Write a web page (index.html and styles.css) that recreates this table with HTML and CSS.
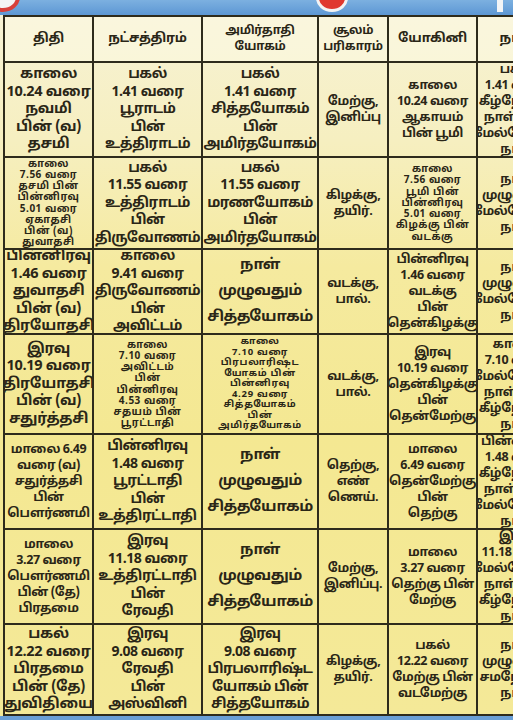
FILE: index.html
```html
<!DOCTYPE html>
<html lang="ta">
<head>
<meta charset="utf-8">
<link rel="stylesheet" href="styles.css">
</head>
<body>
<div class="page">
  <div class="band">
    <span class="logo-left"></span>
    <span class="logo-mid"></span>
    <span class="logo-right"></span>
  </div>
  <div class="sheet">
    <div class="grid">
      <div class="c h">திதி</div>
      <div class="c h">நட்சத்திரம்</div>
      <div class="c h t">அமிர்தாதி<br>யோகம்</div>
      <div class="c h t">சூலம்<br>பரிகாரம்</div>
      <div class="c h">யோகினி</div>
      <div class="c h">நாள்</div>

      <div class="c c1">காலை<br>10.24 வரை<br>நவமி<br>பின் (வ)<br>தசமி</div>
      <div class="c">பகல்<br>1.41 வரை<br>பூராடம்<br>பின்<br>உத்திராடம்</div>
      <div class="c">பகல்<br>1.41 வரை<br>சித்தயோகம்<br>பின்<br>அமிர்தயோகம்</div>
      <div class="c sm">மேற்கு,<br>இனிப்பு</div>
      <div class="c sm">காலை<br>10.24 வரை<br>ஆகாயம்<br>பின் பூமி</div>
      <div class="c sm">பகல்<br>1.41 வரை<br>கீழ்நோக்கு<br>நாள் பின்<br>மேல்நோக்கு<br>நாள்</div>

      <div class="c xs">காலை<br>7.56 வரை<br>தசமி பின்<br>பின்னிரவு<br>5.01 வரை<br>ஏகாதசி<br>பின் (வ)<br>துவாதசி</div>
      <div class="c">பகல்<br>11.55 வரை<br>உத்திராடம்<br>பின்<br>திருவோணம்</div>
      <div class="c">பகல்<br>11.55 வரை<br>மரணயோகம்<br>பின்<br>அமிர்தயோகம்</div>
      <div class="c sm">கிழக்கு,<br>தயிர்.</div>
      <div class="c xs">காலை<br>7.56 வரை<br>பூமி பின்<br>பின்னிரவு<br>5.01 வரை<br>கிழக்கு பின்<br>வடக்கு</div>
      <div class="c sm">நாள்<br>முழுவதும்<br>மேல்நோக்கு<br>நாள்</div>

      <div class="c c1">பின்னிரவு<br>1.46 வரை<br>துவாதசி<br>பின் (வ)<br>திரயோதசி</div>
      <div class="c">காலை<br>9.41 வரை<br>திருவோணம்<br>பின்<br>அவிட்டம்</div>
      <div class="c wide">நாள்<br>முழுவதும்<br>சித்தயோகம்</div>
      <div class="c sm">வடக்கு,<br>பால்.</div>
      <div class="c sm">பின்னிரவு<br>1.46 வரை<br>வடக்கு<br>பின்<br>தென்கிழக்கு</div>
      <div class="c sm">நாள்<br>முழுவதும்<br>மேல்நோக்கு<br>நாள்</div>

      <div class="c c1">இரவு<br>10.19 வரை<br>திரயோதசி<br>பின் (வ)<br>சதுர்த்தசி</div>
      <div class="c xs">காலை<br>7.10 வரை<br>அவிட்டம்<br>பின்<br>பின்னிரவு<br>4.53 வரை<br>சதயம் பின்<br>பூரட்டாதி</div>
      <div class="c xxs">காலை<br>7.10 வரை<br>பிரபலாரிஷ்ட<br>யோகம் பின்<br>பின்னிரவு<br>4.29 வரை<br>சித்தயோகம்<br>பின்<br>அமிர்தயோகம்</div>
      <div class="c sm">வடக்கு,<br>பால்.</div>
      <div class="c sm">இரவு<br>10.19 வரை<br>தென்கிழக்கு<br>பின்<br>தென்மேற்கு</div>
      <div class="c sm">காலை<br>7.10 வரை<br>மேல்நோக்கு<br>நாள் பின்<br>கீழ்நோக்கு<br>நாள்</div>

      <div class="c sm">மாலை 6.49<br>வரை (வ)<br>சதுர்த்தசி<br>பின்<br>பௌர்ணமி</div>
      <div class="c">பின்னிரவு<br>1.48 வரை<br>பூரட்டாதி<br>பின்<br>உத்திரட்டாதி</div>
      <div class="c wide">நாள்<br>முழுவதும்<br>சித்தயோகம்</div>
      <div class="c sm">தெற்கு,<br>எண்<br>ணெய்.</div>
      <div class="c sm">மாலை<br>6.49 வரை<br>தென்மேற்கு<br>பின்<br>தெற்கு</div>
      <div class="c sm">பின்னிரவு<br>1.48 வரை<br>கீழ்நோக்கு<br>நாள் பின்<br>மேல்நோக்கு<br>நாள்</div>

      <div class="c sm">மாலை<br>3.27 வரை<br>பௌர்ணமி<br>பின் (தே)<br>பிரதமை</div>
      <div class="c">இரவு<br>11.18 வரை<br>உத்திரட்டாதி<br>பின்<br>ரேவதி</div>
      <div class="c wide">நாள்<br>முழுவதும்<br>சித்தயோகம்</div>
      <div class="c sm">மேற்கு,<br>இனிப்பு.</div>
      <div class="c sm">மாலை<br>3.27 வரை<br>தெற்கு பின்<br>மேற்கு</div>
      <div class="c sm">இரவு<br>11.18 வரை<br>மேல்நோக்கு<br>நாள் பின்<br>கீழ்நோக்கு<br>நாள்</div>

      <div class="c c1">பகல்<br>12.22 வரை<br>பிரதமை<br>பின் (தே)<br>துவிதியை</div>
      <div class="c">இரவு<br>9.08 வரை<br>ரேவதி<br>பின்<br>அஸ்வினி</div>
      <div class="c">இரவு<br>9.08 வரை<br>பிரபலாரிஷ்ட<br>யோகம் பின்<br>சித்தயோகம்</div>
      <div class="c sm">கிழக்கு,<br>தயிர்.</div>
      <div class="c sm">பகல்<br>12.22 வரை<br>மேற்கு பின்<br>வடமேற்கு</div>
      <div class="c sm">நாள்<br>முழுவதும்<br>சமநோக்கு<br>நாள்</div>
    </div>
  </div>
  <div class="band-bottom"></div>
</div>
</body>
</html>
```
FILE: styles.css
```css
* { box-sizing: border-box; }
html, body { margin: 0; padding: 0; }
body {
  width: 513px;
  height: 720px;
  overflow: hidden;
  background: #5e97d2;
  font-family: "Noto Sans Tamil", "Lohit Tamil", "Noto Sans", "DejaVu Sans", sans-serif;
  color: #2a2617;
}
.page {
  width: 513px;
  height: 720px;
  overflow: hidden;
  display: flex;
  flex-direction: column;
}
.band {
  position: relative;
  height: 15px;
  flex: none;
  background: linear-gradient(180deg, #7cb0e0 0%, #5d97d4 100%);
}
.logo-left {
  position: absolute;
  left: -14px;
  top: -18px;
  width: 34px;
  height: 30px;
  border-radius: 50%;
  background: #f4f4f4;
  border: 4px solid #d8403a;
}
.logo-mid {
  position: absolute;
  left: 316px;
  top: -16px;
  width: 32px;
  height: 28px;
  border-radius: 50%;
  background: #e0382f;
  border: 3px solid #f3f3f3;
}
.logo-right {
  position: absolute;
  left: 497px;
  top: 0;
  width: 6px;
  height: 12px;
  background: #f2f4f6;
}
.sheet {
  flex: none;
  width: 600px;
  padding-left: 3px;
  background: linear-gradient(180deg, #f7f2d4 0%, #f6efc0 18%, #f5ea9f 36%, #f4e892 60%, #f4e998 100%);
}
.band-bottom {
  flex: 1;
  background: #6a9fd6;
}
.grid {
  display: grid;
  grid-template-columns: 89px 109px 116px 70px 89px 80px;
  grid-template-rows: 46px 95px 92px 85px 100px 95px 95px 91px;
  border-top: 2px solid #2e2b1c;
  border-left: 2px solid #2e2b1c;
  width: 553px;
}
.c {
  border-right: 2px solid #2e2b1c;
  border-bottom: 2px solid #2e2b1c;
  display: flex;
  flex-direction: column;
  justify-content: center;
  align-items: center;
  text-align: center;
  white-space: nowrap;
  overflow: hidden;
  font-weight: 700;
  font-size: 14px;
  line-height: 17.5px;
  letter-spacing: -0.5px;
  padding-top: 1px;
}
.c1 { font-size: 14.5px; letter-spacing: -0.3px; }
.h {
  font-size: 13px;
  line-height: 15px;
  letter-spacing: -0.3px;
  background: rgba(255, 255, 240, 0.35);
}
.h.t { font-size: 12px; line-height: 15.5px; }
.sm { font-size: 12.5px; line-height: 16px; letter-spacing: -0.4px; }
.xs { font-size: 10px; line-height: 11.25px; letter-spacing: 0.5px; }
.xxs { font-size: 9.5px; line-height: 10.5px; letter-spacing: 0.7px; }
.wide { font-size: 15px; line-height: 26px; }
```
